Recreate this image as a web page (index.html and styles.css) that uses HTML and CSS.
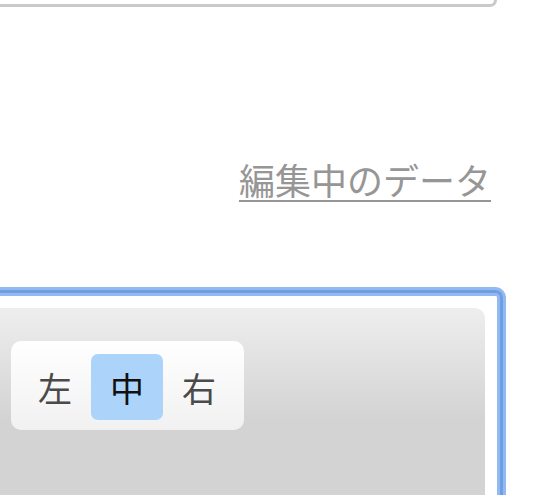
FILE: index.html
```html
<!DOCTYPE html>
<html lang="ja">
<head>
    <meta charset="UTF-8">
    <meta name="viewport" content="width=device-width, initial-scale=1.0">
    <title>編集中のデータ</title>
    <link rel="stylesheet" href="styles.css">
</head>
<body>
    <div class="top-box"></div>

    <div class="data-link-row">
        <a href="#" class="data-link">編集中のデータ</a>
    </div>

    <div class="edit-frame">
        <div class="toolbar-panel">
            <div class="align-control">
                <button class="align-button">左</button>
                <button class="align-button active">中</button>
                <button class="align-button">右</button>
            </div>
        </div>
    </div>
</body>
</html>
```

FILE: styles.css
```css
* {
    margin: 0;
    padding: 0;
    box-sizing: border-box;
}

html, body {
    overflow: hidden;
}

body {
    font-family: "Noto Sans CJK JP", "Noto Sans", sans-serif;
    background: #ffffff;
    width: 533px;
    height: 495px;
}

.top-box {
    width: 497px;
    height: 7px;
    border-right: 3px solid #c9c9c9;
    border-bottom: 3px solid #c9c9c9;
    border-radius: 0 0 10px 0;
}

.data-link-row {
    display: flex;
    justify-content: flex-end;
    padding-right: 42px;
    margin-top: 154px;
}

.data-link {
    font-size: 36px;
    line-height: 36px;
    color: #969696;
    text-decoration: underline;
    text-decoration-thickness: 2px;
    text-underline-offset: 5px;
}

/* focus-ring style frame: light / dark / light bands */
.edit-frame {
    margin-top: 93px;
    margin-left: -30px;
    width: 533px;
    height: 205px;
    border: 3px solid #6e9fe4;
    border-bottom: none;
    border-radius: 8px 8px 0 0;
    box-shadow: 0 0 0 3px #92baf0,
        inset 0 3px 0 0 #92baf0,
        inset 3px 0 0 0 #92baf0,
        inset -3px 0 0 0 #92baf0;
    background: #ffffff;
    padding: 15px 15px 0 15px;
}

.toolbar-panel {
    height: 187px;
    border-radius: 10px 10px 0 0;
    background: linear-gradient(#eeeeee 0, #d3d3d3 112px, #d3d3d3 100%);
    padding: 33px 0 0 23px;
}

.align-control {
    display: inline-flex;
    padding: 13px 9px 10px 8px;
    border-radius: 10px;
    background: linear-gradient(#ffffff, #f1f1f1);
}

.align-button {
    width: 72px;
    height: 66px;
    border: none;
    border-radius: 7px;
    background: transparent;
    font-family: "Noto Sans CJK JP", sans-serif;
    font-size: 34px;
    color: #4a4a4a;
    cursor: pointer;
}

.align-button.active {
    background: #acd4fa;
    color: #111111;
}
```
